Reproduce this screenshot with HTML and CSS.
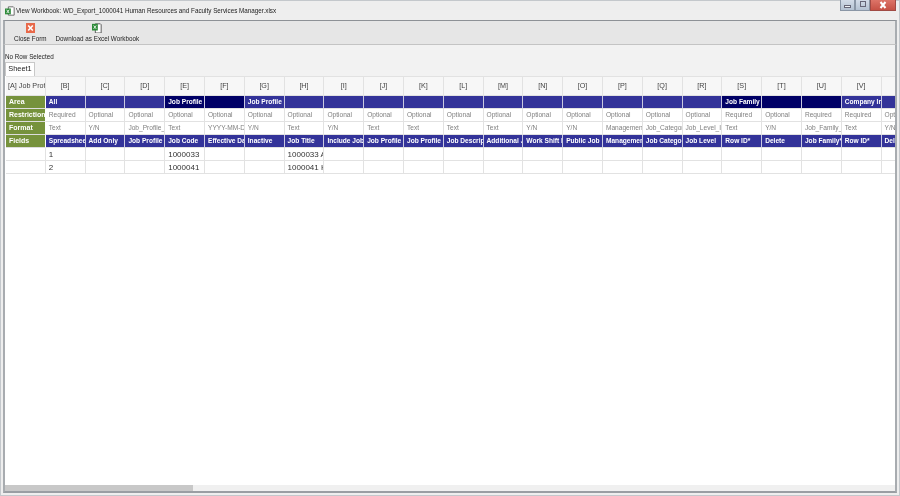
FILE: index.html
```html
<!DOCTYPE html>
<html lang="en">
<head>
    <meta charset="UTF-8">
    <meta name="viewport" content="width=device-width, initial-scale=1.0">
    <title>View Workbook</title>
    <link rel="stylesheet" href="styles.css">
</head>
<body>
    <div class="window">
        <div class="title-bar">
            <svg class="xl-icon" width="10" height="10" viewBox="0 0 12 12">
                <path d="M4 1h6l1 1v9H4z" fill="#fff" stroke="#555" stroke-width="1"/>
                <path d="M0 3h7v7H0z" fill="#2e8b3a"/>
                <path d="M2 4.5l3 4M5 4.5l-3 4" stroke="#fff" stroke-width="1"/>
            </svg>
            <span class="title-text">View Workbook: WD_Export_1000041 Human Resources and Faculty Services Manager.xlsx</span>
        </div>
        <div class="win-buttons">
            <div class="win-btn min"><span></span></div>
            <div class="win-btn max"><span></span></div>
            <div class="win-btn close">
                <svg width="8" height="8" viewBox="0 0 8 8"><path d="M1.5 1l5 6M6.5 1l-5 6" stroke="#fff" stroke-width="2"/></svg>
            </div>
        </div>
        <div class="toolbar">
            <div class="tool">
                <svg width="9" height="10" viewBox="0 0 9 10">
                    <rect width="9" height="10" fill="#e8694a"/>
                    <path d="M2.2 2.5l4.6 5M6.8 2.5l-4.6 5" stroke="#fff" stroke-width="1.6"/>
                </svg>
                <span>Close Form</span>
            </div>
            <div class="tool">
                <svg width="10" height="10" viewBox="0 0 12 12">
                    <path d="M4 1h6l1 1v10H4z" fill="#fff" stroke="#444" stroke-width="1"/>
                    <path d="M0 1h7v8H0z" fill="#2e8b3a"/>
                    <path d="M2 3l3 4M5 3l-3 4" stroke="#fff" stroke-width="1"/>
                </svg>
                <span>Download as Excel Workbook</span>
            </div>
        </div>
        <div class="content">
            <div class="status">No Row Selected</div>
            <div class="tabs"><div class="tab">Sheet1</div></div>
            <div class="sheet">
                <table class="grid">
                    <tr class="letters">
                        <td class="first">[A] Job Profile</td><td>[B]</td><td>[C]</td><td>[D]</td><td>[E]</td><td>[F]</td><td>[G]</td><td>[H]</td><td>[I]</td><td>[J]</td><td>[K]</td><td>[L]</td><td>[M]</td><td>[N]</td><td>[O]</td><td>[P]</td><td>[Q]</td><td>[R]</td><td>[S]</td><td>[T]</td><td>[U]</td><td>[V]</td><td>[W]</td>
                    </tr>
                    <tr class="area">
                        <td class="label">Area</td><td>All</td><td></td><td></td><td class="dark">Job Profile</td><td class="dark"></td><td>Job Profile</td><td></td><td></td><td></td><td></td><td></td><td></td><td></td><td></td><td></td><td></td><td></td><td class="dark">Job Family</td><td class="dark"></td><td class="dark"></td><td>Company Ir</td><td></td>
                    </tr>
                    <tr class="meta">
                        <td class="label">Restrictions</td><td>Required</td><td>Optional</td><td>Optional</td><td>Optional</td><td>Optional</td><td>Optional</td><td>Optional</td><td>Optional</td><td>Optional</td><td>Optional</td><td>Optional</td><td>Optional</td><td>Optional</td><td>Optional</td><td>Optional</td><td>Optional</td><td>Optional</td><td>Required</td><td>Optional</td><td>Required</td><td>Required</td><td>Optional</td>
                    </tr>
                    <tr class="meta">
                        <td class="label">Format</td><td>Text</td><td>Y/N</td><td>Job_Profile_</td><td>Text</td><td>YYYY-MM-DD</td><td>Y/N</td><td>Text</td><td>Y/N</td><td>Text</td><td>Text</td><td>Text</td><td>Text</td><td>Y/N</td><td>Y/N</td><td>Management</td><td>Job_Category</td><td>Job_Level_ID</td><td>Text</td><td>Y/N</td><td>Job_Family_</td><td>Text</td><td>Y/N</td>
                    </tr>
                    <tr class="fields">
                        <td class="label">Fields</td><td>Spreadsheet</td><td>Add Only</td><td>Job Profile</td><td>Job Code</td><td>Effective Date</td><td>Inactive</td><td>Job Title</td><td>Include Job</td><td>Job Profile</td><td>Job Profile</td><td>Job Description</td><td>Additional Job</td><td>Work Shift Required</td><td>Public Job</td><td>Management</td><td>Job Category</td><td>Job Level</td><td>Row ID*</td><td>Delete</td><td>Job Family*</td><td>Row ID*</td><td>Delete</td>
                    </tr>
                    <tr class="data">
                        <td></td><td>1</td><td></td><td></td><td>1000033</td><td></td><td></td><td>1000033 Accountant</td><td></td><td></td><td></td><td></td><td></td><td></td><td></td><td></td><td></td><td></td><td></td><td></td><td></td><td></td><td></td>
                    </tr>
                    <tr class="data">
                        <td></td><td>2</td><td></td><td></td><td>1000041</td><td></td><td></td><td>1000041 Human</td><td></td><td></td><td></td><td></td><td></td><td></td><td></td><td></td><td></td><td></td><td></td><td></td><td></td><td></td><td></td>
                    </tr>
                </table>
                <div class="scrollbar"><div class="thumb"></div></div>
            </div>
        </div>
    </div>
</body>
</html>
```

FILE: styles.css
```css
html, body {
    margin: 0;
    padding: 0;
    background-color: #fff;
}

body {
    font-family: "Liberation Sans", Arial, sans-serif;
    font-size: 6.3px;
    color: #222;
    width: 900px;
    height: 496px;
    overflow: hidden;
}

/* the reference is a scaled down capture, so everything is a bit soft */
.window {
    position: relative;
    box-sizing: border-box;
    width: 900px;
    height: 496px;
    display: flex;
    flex-direction: column;
    background-color: #eee;
    border: 1px solid #c4c8cc;
    padding: 0 2px 2px 2px;
    filter: blur(0.3px);
}

.title-bar {
    height: 19px;
    display: flex;
    align-items: center;
    gap: 1px;
    padding-left: 2px;
    font-size: 6.3px;
    flex: none;
}

.win-buttons {
    position: absolute;
    top: -1px;
    right: 3px;
    display: flex;
    height: 11px;
}

.win-btn {
    box-sizing: border-box;
    width: 15px;
    background: linear-gradient(#d3dce8, #b4c2d2);
    border: 1px solid #8a96a6;
    border-top: none;
    position: relative;
}

.win-btn.min span {
    position: absolute;
    left: 3px;
    right: 3px;
    bottom: 2px;
    height: 3px;
    background-color: #eef1f4;
    border: 1px solid #667;
    box-sizing: border-box;
}

.win-btn.max span {
    position: absolute;
    left: 4px;
    top: 1px;
    width: 6px;
    height: 6px;
    border: 1px solid #667;
    box-sizing: border-box;
}

.win-btn.close {
    width: 26px;
    background: linear-gradient(#dd7468, #c65145);
    border-color: #a04a44;
    display: flex;
    align-items: center;
    justify-content: center;
}

.toolbar {
    flex: none;
    height: 25px;
    display: flex;
    gap: 9px;
    padding: 2px 0 0 9px;
    box-sizing: border-box;
    background-color: #e6e6e6;
    border-top: 1px solid #8d9196;
    border-left: 2px solid #a8acb0;
    border-right: 2px solid #a8acb0;
    border-bottom: 1px solid #c4c4c4;
}

.tool {
    display: flex;
    flex-direction: column;
    align-items: center;
    gap: 2px;
}

.content {
    flex: 1;
    min-height: 0;
    display: flex;
    flex-direction: column;
    background-color: #f2f2f2;
    border-left: 2px solid #a8acb0;
    border-right: 2px solid #a8acb0;
    border-bottom: 2px solid #9a9ea3;
}

.status {
    flex: none;
    height: 17px;
    line-height: 24px;
    white-space: nowrap;
}

.tabs {
    flex: none;
    height: 14px;
    background-color: #f2f2f2;
}

.tab {
    box-sizing: border-box;
    width: 30px;
    height: 14px;
    line-height: 12px;
    text-align: center;
    background-color: #fff;
    border: 1px solid #c8c8c8;
    border-bottom: none;
    font-size: 7.4px;
}

.sheet {
    flex: 1;
    min-height: 0;
    position: relative;
    background-color: #fff;
    overflow: hidden;
    padding-left: 1px;
}

.grid {
    table-layout: fixed;
    border-collapse: separate;
    border-spacing: 0;
    width: 915.4px;
    font-size: 6.6px;
}

.grid td {
    box-sizing: border-box;
    width: 39.8px;
    height: 13px;
    padding: 0 0 0 3px;
    overflow: hidden;
    white-space: nowrap;
    border-right: 1px solid #e2e2e2;
    border-bottom: 1px solid #e2e2e2;
    line-height: 12px;
}

.grid .letters td {
    height: 20px;
    text-align: center;
    background-color: #f7f7f7;
    border-top: 1px solid #e2e2e2;
    color: #444;
    padding-left: 0;
    font-size: 7.2px;
}

.grid .letters td.first {
    text-align: left;
    padding-left: 2px;
}

.grid .label {
    background-color: #76923c;
    color: #fff;
    font-weight: 700;
    font-size: 7px;
    padding-left: 3px;
    border-right: 1px solid #fff;
    border-bottom: 1px solid #ddd;
}

.area td, .fields td {
    background-color: #333399;
    color: #fff;
    font-weight: 700;
    border-right: 1px solid #c9c9e0;
}

.area td.dark {
    background-color: #000066;
}

.meta td {
    color: #808080;
    background-color: #fff;
}

.grid .data td {
    font-size: 8px;
    color: #333;
    background-color: #fff;
    padding-top: 1px;
    line-height: 11px;
}

.scrollbar {
    position: absolute;
    left: 0;
    right: 0;
    bottom: 0;
    height: 6px;
    background-color: #f0f0f0;
}

.thumb {
    width: 188px;
    height: 6px;
    background-color: #c8c8c8;
}
```
